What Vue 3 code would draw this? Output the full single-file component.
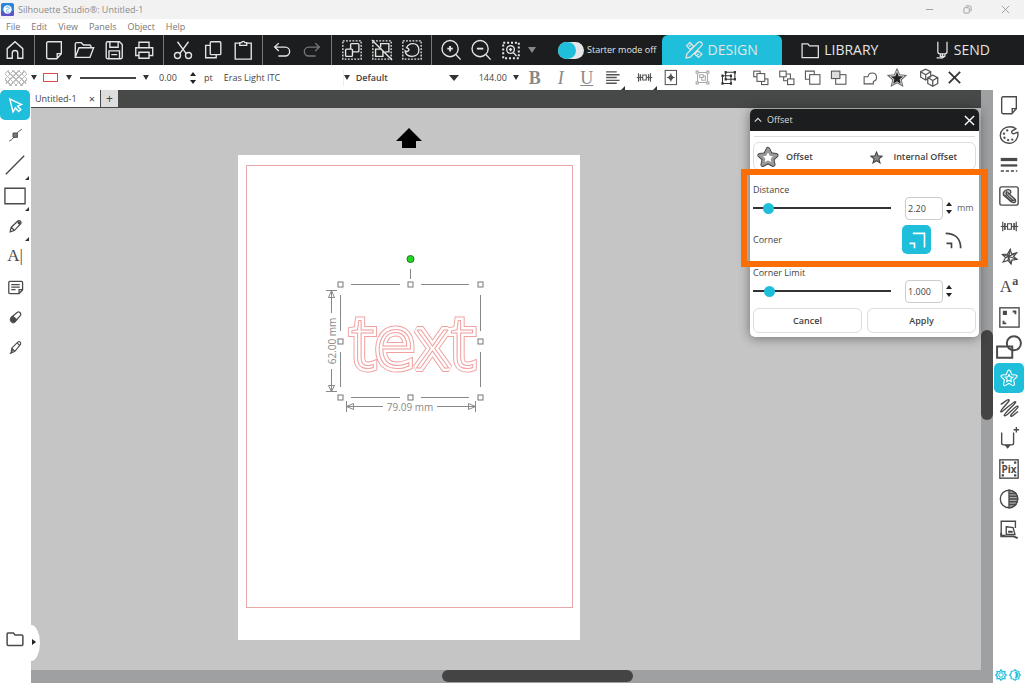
<script setup>
import { ref } from 'vue'

const menus = ['File', 'Edit', 'View', 'Panels', 'Object', 'Help']

const icons = {
  home: '<path d="M3.500 10.500 12 3l8.500 7.500V21h-5.500v-5.500a3 3 0 0 0-6 0V21H3.500z"/>',
  note: '<path d="M5.500 3h14.500v13l-5 5.500H5.500a1.500 1.500 0 0 1-1.500-1.500V4.500A1.500 1.500 0 0 1 5.500 3zM20 16h-4.500v5"/>',
  open: '<path d="M2.500 20V5.500a1.500 1.500 0 0 1 1.500-1.500h5l2.500 2.500H18a1.500 1.500 0 0 1 1.500 1.500v1.500M2.500 20l4-10.500h16L18.500 20z"/>',
  save: '<path d="M3.500 4.500A1.500 1.500 0 0 1 5 3h13l3 3v14a1.500 1.500 0 0 1-1.500 1.500H5A1.500 1.500 0 0 1 3.500 20zM7.500 3v6h9V3M6.500 21.500V13h11.500v8.500M9 17h6.500"/>',
  print: '<path d="M6.500 9V3.500h11V9M6 18H3V9.500h18.500V18H18M6.500 14.500h11v6.500h-11z"/>',
  cut: '<path d="m6 3 9.500 13M18 3 8.500 16"/><circle cx="6" cy="18" r="3.300"/><circle cx="18" cy="18" r="3.300"/>',
  copy: '<rect x="9" y="3" width="11.500" height="14" rx="1"/><path d="M9 7H4v13.500h11.500V17"/>',
  paste: '<path d="M8.500 4.500H3.500v17.500h17.500V4.500h-5"/><path d="M8.500 7V4h2a1.800 1.800 0 0 1 3.500 0h2v3z"/>',
  undo: '<path d="M8.500 4.500 4 8.800l4.500 4.300M4 8.800h11.500a4.500 4.500 0 0 1 0 9.700H8"/>',
  redo: '<path d="M15.500 4.500 20 8.800l-4.500 4.300M20 8.800H8.500a4.500 4.500 0 0 0 0 9.700H16"/>',
  selAll: '<rect x="2" y="2" width="20" height="20" stroke-dasharray="2 1.500"/><rect x="10.500" y="5" width="9" height="9" rx="1"/><rect x="5" y="11" width="7.500" height="8" rx="1" fill="#1c1d1e"/>',
  deselect: '<rect x="2" y="2" width="20" height="20" stroke-dasharray="2 1.500"/><path d="M10.500 9V5h9v9h-4M12 11H5v8h8v-6M1 1l22 22"/>',
  selColor: '<rect x="2" y="2" width="20" height="20" stroke-dasharray="2 1.500"/><path d="M12.500 5c4.500 0 7 3 7 7s-3 7-7.500 7c-4 0-7-2.500-7.500-6 1.500 1 3 1 4-.5C9.500 10.500 7 10 6 9.500 7.500 6.500 9.500 5 12.500 5z"/><path stroke-width="2" d="M12 8h.1M15.500 9h.1M17 12h.1M15 15h.1M11 16h.1"/>',
  zoomIn: '<circle cx="11" cy="10.500" r="8.800"/><path d="m17.300 17 5.200 5.500"/><path stroke-width="2" d="M8 10.500h6M11 7.500v6"/>',
  zoomOut: '<circle cx="11" cy="10.500" r="8.800"/><path d="m17.300 17 5.200 5.500"/><path stroke-width="2" d="M7.500 10.500h7"/>',
  zoomSel: '<rect x="3.500" y="4" width="17" height="17" stroke-width="2.200" stroke-dasharray="2.200 2.050"/><circle cx="11.500" cy="11.500" r="4.200"/><path d="m14.700 15 3.300 3.500M9.700 11.500h3.600M11.500 9.700v3.600"/>',
  cross: '<path d="m4 4 16 16M20 4 4 20"/>',
  design: '<path d="m3 7 4-4 4.500 4.500-4 4zM13 17l4-4L21.500 17l-4 4zM2.500 21.500l1-5L17 3a2.300 2.300 0 0 1 4 4L7.500 20.500zM6 8l2-2M15.500 18.500l2-2"/>',
  library: '<path d="M2.500 4.500h7l2 2.500h10.500v14H2.500z"/>',
  send: '<path d="M7 2v12a2.500 2.500 0 0 0 2.500 2.500h6A2.500 2.500 0 0 0 18 14V2M15.500 16.500v3l-3 2V17M5.500 21.500H12M10 17v2.500h5"/>',
  align: '<path stroke-width="2" d="M3 4h15M3 8h19M3 12h15M3 16h19M3 20h15"/>',
  space: '<path d="M3.500 6v12M20.500 6v12M1 12h8M15 12h8M9.500 8.500v7h5v-7z"/><path stroke-width="2" d="M6.200 7.500v9M17.800 7.500v9"/>',
  center: '<rect x="4.500" y="2" width="16" height="20"/><path d="M12.500 6.500v11M7 12h11"/><path fill="currentColor" d="m12.500 8.500 3.500 3.500-3.500 3.500L9 12z"/>',
  group: '<path d="M5 5h14v14H5zM8 8h5v4H8zM11 12v4h5v-6h-3"/><path fill="#fff" d="M3 3h3v3H3zM18 3h3v3h-3zM3 18h3v3H3zM18 18h3v3h-3z"/>',
  ungroup: '<path d="M8 4.500h13v10H8zM3.500 9.500h12v11h-12z"/><path stroke-width="3.500" d="M6.500 4.500h3M19.500 4.500h3M19.500 14.500h3M2 9.500h3M14 9.500h3M2 20.500h3M14 20.500h3M6.500 14.500h3"/>',
  front: '<rect x="2.500" y="3" width="9" height="8"/><rect x="13.500" y="14" width="9" height="8"/><rect x="7" y="6.500" width="11" height="11" fill="#fff"/>',
  back: '<path d="M8 7h9.500v9.500H8z"/><rect x="2.500" y="3" width="9" height="8" fill="#fff"/><rect x="13.500" y="14" width="9" height="8" fill="#fff"/>',
  forward: '<path d="M2 3h12.500v11.500H2z"/><rect x="8" y="8" width="14.500" height="13.500" fill="#fff"/>',
  backward: '<rect x="8" y="8" width="14.500" height="13.500"/><rect x="2" y="3" width="12" height="10.500" fill="#ddd"/>',
  weld: '<path d="M3 11h5.500A6 6 0 1 1 16 17.500V21H3z"/>',
  star: '<path stroke="#666" stroke-width="3.500" d="m12 2.500 2.800 6.300 6.700.6-5 4.500 1.500 6.600-6-3.500-6 3.500 1.500-6.600-5-4.500 6.700-.6z"/><path stroke="#ccc" fill="#ccc" stroke-width="1.300" d="m12 2.500 2.800 6.300 6.700.6-5 4.500 1.500 6.600-6-3.500-6 3.500 1.500-6.600-5-4.500 6.700-.6z"/><path stroke="none" fill="#222" d="m12 4 2.200 5.600 5.800.4-4.500 3.800 1.500 5.700-5-3.100-5 3.100 1.500-5.700L4 10l5.800-.4z"/>',
  cubes: '<path d="m8 1.500 6 3v6.500l-6 3.500-6-3.500V4.500zM2 4.500l6 3.500 6-3.500M8 8v6.500"/><path fill="#fff" d="m16.500 8.500 6 3v7l-6 3.500-6-3.500v-7zM10.500 11.500l6 3.500 6-3.500M16.500 15v7"/>',
  pointer: '<path stroke-width="2" d="m4 3 4.500 18 3.500-5.500 4.500 5 3-2.500-4.500-5 5.500-2.500z"/>',
  node: '<path d="M2 21c6-3 6-5 9-9s5-6 11-10"/><path fill="#777" d="M8 8h7v7H8z"/>',
  line: '<path d="M2 22 22 2"/>',
  rect: '<path d="M1 3.500h22v17H1z"/>',
  pencil: '<path stroke-width="2" d="m3.500 20.500 1.500-7L16 3c3-1.500 6 1.500 4.500 4.500L10 18.500zM5.500 13.500l4.500 4.500"/><path stroke-width="4" d="m16 4.500 3.500 3.500"/>',
  memo: '<path stroke-width="1.800" d="M4 3.500h16.500a1.500 1.500 0 0 1 1.500 1.500v10.500l-5 5H4A1.500 1.500 0 0 1 2.500 19V5A1.500 1.500 0 0 1 4 3.500zM22 15h-5v5.500M6 8h12M6 11.500h12M6 15h6"/>',
  eraser: '<path stroke-width="2" d="m5 12 10-8.500c3-1.500 7 2 5 5L11 19z"/><path fill="currentColor" d="m4.500 12.500 3.500-3 6.500 6-4 4.500c-4 2.500-9-3-6-7.500z"/>',
  dropper: '<path stroke-width="1.800" d="m6 13 10-10c2.500-1.500 5.500 1 4 4L11 18l-6 3zM6 13l5 5M15 5l4 4M3 22l5-6"/>',
  folder: '<path d="M2.500 4H10l2 2.500h9a1.500 1.500 0 0 1 1.500 1.500v11a1.500 1.500 0 0 1-1.500 1.500H3A1.500 1.500 0 0 1 1.500 19V5A1 1 0 0 1 2.500 4z"/>',
  palette: '<path d="M13 3c2.500 0 5 .8 6.500 2.200L15.500 7.500c-1.500 2 .5 3.500 2 3 1.500-.4 3-1.500 4-1.500C23 15 18.500 21 12 21c-5.500 0-9.500-3.500-9.500-8.500C2.500 7 7 3 13 3z"/><path stroke-width="2.500" stroke-linecap="round" d="M10 7h.1M6.500 10.500h.1M7 15h.1M11 17.500h.1M15.500 17h.1"/>',
  lines: '<path stroke-width="3.500" d="M3 6h18"/><path stroke-width="2.500" d="M3 12.500h18"/><path stroke-dasharray="3.500 2" d="M3 18.500h18"/>',
  image: '<rect x="2" y="2" width="20" height="20" rx="2"/><path fill="#ccc" d="M6 11c-1-3 2-6 5-6s4 3 2 4.500c-1 1-2 0-2-1l8 7.500c1 3-2 4-4 2.500z"/><path d="m7 11 7 7 5-2M10 7c-2 1-1 4 1 5l5 5"/>',
  morph: '<path d="m13 3 1.500 6 6.500-1.500-4 4.500 4.500 3.500-6.500 1-1 5-4-4.500-6 2 3-5.500L3 9.500l6.500-.5z"/><path d="m3 9.500 18.500 6M13 3l-3 14M21 7.500l-14 6M9.500 9l4.500 12.500"/>',
  trace: '<rect x="2" y="2" width="21" height="21"/><path fill="currentColor" d="M6 6h3v3H6z"/><path stroke-width="2" d="M16 6h3v3M6 16v3h3"/>',
  shapes: '<path stroke-width="1.800" d="M1 11.500h14V22H1z"/><circle cx="16.500" cy="8.500" r="6.500" stroke-width="1.800"/>',
  starRing: '<path stroke-width="4.500" stroke-linejoin="round" d="m12 4 2.400 5.300 5.600.6-4.200 3.900 1.200 5.700-5-2.900-5 2.900 1.200-5.700L4 9.900l5.600-.6z"/><path stroke="#1fbfdb" stroke-linejoin="round" stroke-width="1.800" d="m12 4 2.400 5.300 5.600.6-4.200 3.900 1.200 5.700-5-2.900-5 2.900 1.200-5.700L4 9.900l5.600-.6z"/>',
  sketch: '<path d="M3 8c3-1 7-6 9-5S2 14 3 16 16 5 19 5 5 19 7 20.500 19 9 21.500 10 12 20 14 21s5-4 8-5"/>',
  force: '<path d="M4 6v11.500a2 2 0 0 0 2 2h9a2 2 0 0 0 2-2V6M20 0v6M17 3h6"/><path fill="currentColor" d="m8.500 20 2 2.500 2-2.500z"/>',
  pix: '<rect x="2" y="2" width="20" height="20"/><path stroke-width="2.500" d="M4 5h2.500M17.500 5H20M4 19h2.500M17.500 19H20"/>',
  contrast: '<circle cx="12" cy="12" r="9.500"/><path fill="#aaa" d="M12 2.500a9.500 9.500 0 0 1 0 19z"/><path d="M12 6h7M12 9h9M12 12h9.500M12 15h9M12 18h7"/>',
  layers: '<path d="M19 11V3.500H3.500V19H8M9 9.500l7.500 1 2 7.500H9z"/><path stroke-width="2" d="M3.500 16v4H17l4.500 2M11 15h5"/>',
  gear: '<circle cx="12" cy="12" r="4.500" stroke-width="2"/><path stroke-width="2.500" d="m12 1.500 3 4 5-.5-.5 4.500 3 2.500-3 3 .5 4.500-5-.5-3 3.500-3-3.500-5 .5.500-4.500-3-3 3-2.500L4 5l5 .5z"/>',
  theme: '<path stroke-width="2.500" d="m12 1.500 3 2.500 4.500.5.500 4.500 2.500 3-2.500 3-.5 4.500-4.500.5-3 2.500L9 20l-4.500-.5L4 15l-2.500-3L4 9l.5-4.500L9 4z"/><path fill="currentColor" d="M12 6a6 6 0 0 1 0 12c3-3 3-9 0-12z"/>',
  sharp: '<path d="M7 4h14v17M3 16h6v6"/>',
  round: '<path d="M2 4c11 0 18 6 18 18M3 16h6v6"/>',
}

const barGroups = [
  [['home', 'Home']],
  [['note', 'New'], ['open', 'Open'], ['save', 'Save'], ['print', 'Print']],
  [['cut', 'Cut'], ['copy', 'Copy'], ['paste', 'Paste']],
  [['undo', 'Undo'], ['redo', 'Redo']],
  [['selAll', 'Select all'], ['deselect', 'Deselect'], ['selColor', 'Select by color']],
  [['zoomIn', 'Zoom in'], ['zoomOut', 'Zoom out'], ['zoomSel', 'Zoom to selection']],
]
const propGroups = [
  ['group', 'ungroup'],
  ['front', 'back', 'forward', 'backward'],
  ['weld', 'star'],
  ['cubes', 'cross'],
]
const leftTools = ['pointer', 'node', 'line', 'rect', 'pencil', 'type', 'memo', 'eraser', 'dropper']
const cornered = ['line', 'rect', 'pencil']
const rightTools = ['note', 'palette', 'lines', 'image', 'space', 'morph', 'fonts', 'trace', 'shapes', 'starRing', 'sketch', 'force', 'pix', 'contrast', 'layers']

const handles = [340, 410, 480].flatMap(x => [284, 341, 397].map(y => [x, y])).filter(([x, y]) => x !== 410 || y !== 341)

const starter = ref(false)
const distance = ref(8)
const limit = ref(9)
</script>

<template>
  <div class="app">
    <header class="titlebar">
      <svg class="logo" viewBox="0 0 14 14"><rect width="14" height="14" rx="2" fill="#2b86d9" /><path d="M0 9h14v3a2 2 0 0 1-2 2H2a2 2 0 0 1-2-2z" fill="#5a55c8" /><circle cx="7" cy="7" r="4.500" fill="#fff" /><path d="M5 5c2-2 5 0 4 1S5 7 6 9s3 0 3 0" fill="none" stroke="#49b6e4" /></svg>
      <span class="title">Silhouette Studio®: Untitled-1</span>
      <button class="win" aria-label="Minimize"><svg viewBox="0 0 10 10"><path d="M1 5h8" /></svg></button>
      <button class="win" aria-label="Restore"><svg viewBox="0 0 10 10"><rect x="1" y="3" width="6" height="6" rx="1" /><path d="M3 1h4a2 2 0 0 1 2 2v4" /></svg></button>
      <button class="win" aria-label="Close"><svg viewBox="0 0 10 10"><path d="m1 1 8 8M9 1 1 9" /></svg></button>
    </header>

    <nav class="menubar">
      <button v-for="m in menus" :key="m">{{ m }}</button>
    </nav>

    <div class="toolbar">
      <div v-for="(g, i) in barGroups" :key="i" class="group">
        <button v-for="[icon, label] in g" :key="icon" :class="['tool', icon]" :aria-label="label">
          <svg class="ico" viewBox="0 0 24 24" v-html="icons[icon]" />
        </button>
      </div>
      <span class="caret dim"></span>
      <label class="starter"><input v-model="starter" type="checkbox" class="switch">Starter mode off</label>
      <button class="mode active"><svg class="ico" viewBox="0 0 24 24" v-html="icons.design" />DESIGN</button>
      <button class="mode library"><svg class="ico" viewBox="0 0 24 24" v-html="icons.library" />LIBRARY</button>
      <button class="mode send"><svg class="ico" viewBox="0 0 24 24" v-html="icons.send" />SEND</button>
    </div>

    <div class="props">
      <button class="swatch" aria-label="Fill color"></button>
      <span class="caret"></span>
      <button class="outline" aria-label="Line color"></button>
      <span class="caret"></span>
      <button class="stroke" aria-label="Line style"></button>
      <span class="caret"></span>
      <input class="thick" value="0.00" aria-label="Line thickness">
      <span class="spin"><i></i><i></i></span>
      <span class="unit">pt</span>
      <select class="font" aria-label="Font"><option>Eras Light ITC</option></select>
      <span class="caret"></span>
      <select class="style" aria-label="Font style"><option>Default</option></select>
      <span class="caret big"></span>
      <input class="size" value="144.00" aria-label="Font size">
      <span class="caret"></span>
      <div class="cluster text">
        <button class="b">B</button><button class="i">I</button><button class="u">U</button>
        <button class="more" aria-label="Justify"><svg class="ico" viewBox="0 0 24 24" v-html="icons.align" /></button>
      </div>
      <div class="cluster">
        <button class="more" aria-label="Spacing"><svg class="ico" viewBox="0 0 24 24" v-html="icons.space" /></button>
        <button aria-label="Center to page"><svg class="ico" viewBox="0 0 24 24" v-html="icons.center" /></button>
      </div>
      <div v-for="(g, i) in propGroups" :key="i" class="cluster">
        <button v-for="icon in g" :key="icon" :class="'p-' + icon" :aria-label="icon"><svg class="ico" viewBox="0 0 24 24" v-html="icons[icon]" /></button>
      </div>
    </div>

    <main class="body">
      <aside class="side left">
        <button v-for="t in leftTools" :key="t" :class="{ on: t === 'pointer', more: cornered.includes(t) }" :aria-label="t">
          <span v-if="t === 'type'" class="type">A|</span>
          <svg v-else class="ico" viewBox="0 0 24 24" v-html="icons[t]" />
        </button>
        <button class="lib" aria-label="Library folder"><svg class="ico" viewBox="0 0 24 24" v-html="icons.folder" /></button>
      </aside>

      <section class="work">
        <div class="tabs">
          <div class="tab">Untitled-1<button aria-label="Close tab">×</button></div>
          <button class="add" aria-label="New tab">+</button>
        </div>
        <div class="canvas">
          <svg class="feed" viewBox="0 0 26 20"><path d="M13 0 26 13h-6v7H6v-7H0z" /></svg>
          <div class="page">
            <div class="margin"></div>
            <svg class="selection" viewBox="320 250 170 170">
              <g class="word">
                <text class="outer" x="351" y="368">text</text>
                <text class="gap" x="351" y="368">text</text>
                <text class="inner" x="351" y="368">text</text>
              </g>
              <path class="guide" d="M351 284.500h49M421 284.500h48M351 397.500h49M421 397.500h48M340.500 295v36M340.500 352v35M480.500 295v36M480.500 352v35M410.500 269v10" />
              <path class="guide" d="M326 290.500h11M326 391.500h11M331.500 291v22M331.500 369v22M346.500 401v11M475.500 401v11M346 406.500h37M437 406.500h38M328.500 297.500h6l-3-7zM328.500 385.500h6l-3 6zM353.500 403.500v6l-7-3zM468.500 403.500v6l7-3z" />
              <rect v-for="([x, y], i) in handles" :key="i" class="handle" :x="x - 2" :y="y - 2" width="5" height="5" />
              <circle cx="410.500" cy="259" r="3.500" class="rotate" />
              <text class="dim-label" x="410" y="411" text-anchor="middle">79.09 mm</text>
              <text class="dim-label" x="0" y="0" text-anchor="middle" transform="translate(336 341) rotate(-90)">62.00 mm</text>
            </svg>
          </div>
        </div>
        <div class="vscroll"><div class="vthumb"></div></div>
        <div class="hscroll"><div class="hthumb"></div></div>
        <div class="flyout"></div>

        <section class="panel">
          <header>
            <svg class="chev" viewBox="0 0 10 10"><path d="m1 7 4-4 4 4" /></svg>
            <h2>Offset</h2>
            <button aria-label="Close panel"><svg viewBox="0 0 12 12"><path d="m1 1 10 10M11 1 1 11" /></svg></button>
          </header>
          <div class="kinds">
            <button><svg class="bigstar" viewBox="0 0 24 24"><path d="m12 3.500 2.800 5.800 6.200.8-4.500 4.200 1.200 6L12 17.300l-5.700 3 1.200-6L3 10.100l6.200-.8z" stroke="#444" stroke-width="5" /><path d="m12 3.500 2.800 5.800 6.200.8-4.500 4.200 1.200 6L12 17.300l-5.700 3 1.200-6L3 10.100l6.200-.8z" stroke="#999" stroke-width="3" fill="#fff" /></svg>Offset</button>
            <button class="internal"><svg class="smallstar" viewBox="0 0 24 24"><path d="m12 2 3 7 7.500.5-6 5 2 7.500L12 18l-6.500 4 2-7.500-6-5L9 9z" stroke="#444" stroke-width="2" fill="#888" /></svg>Internal Offset</button>
          </div>
          <label class="cap" for="distance">Distance</label>
          <div class="row">
            <input id="distance" v-model="distance" type="range" min="0" max="100">
            <input class="num" value="2.20" aria-label="Distance value">
            <span class="spin"><i></i><i></i></span>
            <span class="mm">mm</span>
          </div>
          <div class="corner">
            <span>Corner</span>
            <button class="on" aria-label="Sharp"><svg class="ico" viewBox="0 0 24 24" v-html="icons.sharp" /></button>
            <button aria-label="Round"><svg class="ico" viewBox="0 0 24 24" v-html="icons.round" /></button>
          </div>
          <label class="cap low" for="limit">Corner Limit</label>
          <div class="row">
            <input id="limit" v-model="limit" type="range" min="0" max="100">
            <input class="num" value="1.000" aria-label="Corner limit value">
            <span class="spin"><i></i><i></i></span>
          </div>
          <div class="actions"><button>Cancel</button><button>Apply</button></div>
        </section>
        <div class="highlight"></div>
      </section>

      <aside class="side right">
        <button v-for="t in rightTools" :key="t" :class="['r-' + t, { on: t === 'starRing' }]" :aria-label="t">
          <span v-if="t === 'fonts'" class="type">A<sup>a</sup></span>
          <template v-else>
            <svg class="ico" viewBox="0 0 24 24" v-html="icons[t]" />
            <b v-if="t === 'pix'" class="pixtext">Pix</b>
          </template>
        </button>
        <div class="prefs">
          <button aria-label="Preferences"><svg class="ico" viewBox="0 0 24 24" v-html="icons.gear" /></button>
          <button aria-label="Theme"><svg class="ico" viewBox="0 0 24 24" v-html="icons.theme" /></button>
        </div>
      </aside>
    </main>
  </div>
</template>

<style>
body { margin: 0; overflow: hidden; }
</style>

<style scoped>
* { box-sizing: border-box; }
.app { height: 100vh; display: flex; flex-direction: column; font: 9px/12px "Open Sans", "Noto Sans", sans-serif; color: #444; background: #fff; }
button { border: 0; padding: 0; margin: 0; background: none; font: inherit; color: inherit; display: flex; align-items: center; justify-content: center; flex: none; }
input, select { font: inherit; color: inherit; border: 0; padding: 0; margin: 0; background: none; appearance: none; outline: 0; min-width: 0; }
svg { fill: none; stroke: currentColor; flex: none; display: block; }
.ico { width: 22px; height: 22px; stroke-width: 1.5; overflow: visible; }

.titlebar { height: 19px; flex: none; display: flex; align-items: center; background: #f2f2f2; color: #8b8b8b; }
.logo { width: 13px; height: 13px; margin: 0 4px 0 1px; stroke: none; }
.title { flex: 1; }
.win { width: 38px; height: 19px; color: #999; }
.win svg { width: 9px; height: 9px; }

.menubar { height: 16px; flex: none; display: flex; gap: 11px; padding-left: 6px; color: #777; }

.toolbar { height: 30px; flex: none; display: flex; align-items: stretch; background: #1c1d1e; color: #e4e4e4; }
.group { display: flex; padding: 0 4px; border-right: 1px solid #777; }
.group:first-child { padding: 0 4px 0 0; }
.group:nth-child(5) { padding-left: 5px; }
.group:nth-child(6) { border-right: 0; padding-right: 0; }
.tool { width: 30px; }
.tool.redo { color: #777; }
.caret { flex: none; width: 0; height: 0; align-self: center; border: 3px solid transparent; border-top: 5px solid #333; border-bottom: 0; }
.caret.big { border-width: 6px 5px 0; }
.caret.dim { border-width: 6px 4px 0; border-top-color: #888; margin: 0 22px 0 2px; }
.starter { display: flex; align-items: center; gap: 3px; white-space: nowrap; }
.switch { width: 26px; height: 17px; border-radius: 9px; background: #e4e6e7; position: relative; }
.switch::before { content: ""; display: block; width: 18px; height: 17px; border-radius: 9px; background: #1fbfdb; }
.mode { font-size: 14px; gap: 4px; }
.mode.active { width: 120px; margin-left: 6px; padding-right: 3px; background: #1fbfdb; border-radius: 6px 6px 0 0; }
.mode.library { margin-left: 18px; }
.mode.send { margin: 0 34px 0 auto; gap: 2px; }
.mode .ico { width: 20px; height: 20px; }

.props { height: 25px; flex: none; display: flex; align-items: center; background: #fff; }
.swatch { width: 22px; height: 16px; margin: 0 4px 0 5px; border-radius: 5px; background: repeating-linear-gradient(45deg, #bbb 0 1px, transparent 1px 4px), repeating-linear-gradient(-45deg, #bbb 0 1px, transparent 1px 4px); }
.outline { width: 15px; height: 9px; margin: 0 8px 0 6px; border: 1px solid #e04a4a; }
.stroke { width: 56px; height: 2px; margin: 0 7px 0 8px; background: #444; }
.thick { width: 28px; margin: 0 3px 0 10px; }
.spin { display: flex; flex-direction: column; gap: 4px; width: 6px; flex: none; }
.spin i { border: 3px solid transparent; border-bottom: 4px solid #222; border-top: 0; }
.spin i:last-child { border-bottom: 0; border-top: 4px solid #222; }
.unit { margin: 0 11px 0 8px; }
.font { width: 120px; height: 16px; border-right: 1px solid #eee; }
.style { width: 93px; margin-left: 6px; font-weight: 600; }
.size { width: 34px; margin-left: 20px; }
.caret.big + .size + .caret { margin-right: 3px; }
.cluster { display: flex; padding-left: 6px; color: #555; }
.cluster.text { padding-left: 0; }
.cluster button { width: 26px; height: 24px; position: relative; }
.cluster .ico { width: 17px; height: 17px; }
.cluster .p-cubes .ico { width: 20px; height: 20px; }
.cluster .p-star .ico { width: 18px; height: 18px; }
.cluster .p-cross { color: #333; }
.cluster .p-cross .ico { stroke-width: 2.5; }
.cluster .p-group { color: #aaa; }
.cluster .p-ungroup { color: #333; }
.b, .i, .u { font: 18px/22px "Liberation Serif", serif; color: #888; }
.b { font-weight: bold; }
.i { font-style: italic; }
.u { text-decoration: underline; }
.more { position: relative; }
.more::after { content: ""; position: absolute; right: 1px; bottom: 0; border: 2px solid #333; border-top-color: transparent; border-left-color: transparent; }

.body { flex: 1; min-height: 0; display: flex; }
.side { width: 31px; flex: none; display: flex; flex-direction: column; background: #fff; color: #4a4a4a; }
.side > button { width: 30px; height: 30px; position: relative; }
.side > button:nth-child(3n) { margin-bottom: 1px; }
.side .on { background: #1fbfdb; border-radius: 5px; color: #fff; }
.left .ico { width: 17px; height: 17px; }
.left > button:nth-child(2) .ico, .left > button:nth-child(5) .ico, .left > button:nth-child(8) .ico, .left > button:nth-child(9) .ico { width: 15px; height: 15px; }
.left > button:nth-child(3) .ico, .left > button:nth-child(4) .ico { width: 22px; height: 22px; }
.right > button { align-self: flex-end; }
.right .ico { width: 22px; height: 22px; }
.right .r-shapes .ico { width: 26px; height: 26px; }
.right .r-space .ico, .right .r-morph .ico { width: 19px; height: 19px; }
.right .r-starRing .ico { width: 20px; height: 20px; }
.type { font: 17px/20px "Liberation Serif", serif; }
.type sup { font-size: 12px; line-height: 1px; font-weight: bold; }
.left > .lib { margin-top: auto; margin-bottom: 29px; }
.lib .ico { width: 18px; height: 18px; stroke-width: 2; }
.pixtext { position: absolute; font-size: 10px; }
.prefs { margin-top: auto; display: flex; gap: 2px; padding: 0 0 2px 2px; color: #1fbfdb; }
.prefs .ico { width: 12px; height: 12px; }

.work { flex: 1; min-width: 0; position: relative; display: grid; grid-template: 18px 1fr 13px / 1fr 12px; background: #9fa0a1; }
.tabs { display: flex; background: #474848; }
.tab { width: 69px; height: 17px; background: #fff; display: flex; align-items: center; justify-content: space-between; padding: 0 5px 0 4px; }
.tab button { font-size: 11px; }
.add { width: 17px; height: 17px; margin-left: 1px; background: #ddd; font-size: 12px; }
.canvas { grid-row: 2; background: #c5c5c5; position: relative; overflow: hidden; }
.feed { position: absolute; left: 365px; top: 20px; width: 26px; height: 20px; fill: #000; stroke: none; }
.page { position: absolute; left: 207px; top: 47px; width: 342px; height: 485px; background: #fff; }
.margin { position: absolute; inset: 10px 7px 32px 8px; border: 1px solid #e9a8a8; }
.selection { position: absolute; left: 82px; top: 95px; width: 170px; height: 170px; stroke: none; }
.word text { font: 300 72px "Open Sans", "Noto Sans", sans-serif; stroke-linejoin: miter; stroke-miterlimit: 2; fill: #fff; }
.word .outer { stroke: #f2a0a0; stroke-width: 8px; }
.word .gap { stroke: #fff; stroke-width: 6px; }
.word .inner { stroke: #f2a0a0; stroke-width: 1px; }
.guide { stroke: #888; }
.handle { fill: #fff; stroke: #777; }
.rotate { fill: #22d822; stroke: #187a18; }
.dim-label { font-size: 10px; fill: #8a8a8a; }
.vscroll { grid-area: 1 / 2 / 4 / 3; }
.hscroll { grid-area: 3 / 1; }
.vthumb { width: 12px; height: 90px; margin-top: 240px; border-radius: 6px; background: #444; }
.hthumb { width: 191px; height: 12px; margin-left: 411px; border-radius: 6px; background: #444; }
.flyout { position: absolute; left: 0; bottom: 22px; width: 9px; height: 36px; background: #fff; border-radius: 0 9px 9px 0 / 0 18px 18px 0; }
.flyout::after { content: ""; position: absolute; left: 1px; top: 14px; border: 3px solid transparent; border-left: 4px solid #222; border-right: 0; }

.panel { position: absolute; right: 14px; top: 19px; width: 229px; background: #fff; border-radius: 5px; box-shadow: 0 1px 12px rgba(0, 0, 0, .45); padding: 0 3px 4px; }
.panel header { height: 22px; margin: 0 -3px; padding: 0 4px; display: flex; align-items: center; gap: 5px; background: #1c1d1e; border-radius: 5px 5px 0 0; color: #ddd; }
.panel h2 { font: inherit; margin: 0; flex: 1; }
.chev { width: 8px; height: 8px; stroke-width: 1.5; }
.panel header button svg { width: 11px; height: 11px; stroke-width: 1.5; color: #fff; }
.kinds { border: 1px solid #ddd; border-radius: 6px; height: 28px; margin-top: 11px; position: relative; display: flex; align-items: center; justify-content: space-between; font-weight: 600; padding: 2px 18px 0 2px; }
.kinds::before { content: ""; position: absolute; left: 0; right: 0; top: -7px; border-top: 1px solid #ddd; }
.kinds button { gap: 6px; }
.kinds .internal { gap: 10px; }
.bigstar { width: 24px; height: 24px; stroke-linejoin: round; overflow: visible; padding: 1px; }
.smallstar { width: 13px; height: 13px; }
.cap { display: block; margin-top: 14px; }
.row { display: flex; align-items: center; height: 24px; }
.row input[type="range"] { width: 138px; height: 12px; background: linear-gradient(#333, #333) center / 100% 2px no-repeat; }
.row input[type="range"]::-webkit-slider-thumb { appearance: none; width: 11px; height: 11px; border-radius: 50%; background: #1fbfdb; }
.num { width: 38px; height: 23px; margin: 0 2px 0 14px; border: 1px solid #ccc; border-radius: 4px; padding-left: 2px; }
.num + .spin { margin: 0 5px 0 1px; }
.mm { color: #666; }
.corner { display: flex; align-items: center; gap: 8px; margin-top: 5px; padding-right: 8px; }
.corner span { flex: 1; }
.corner button { width: 29px; height: 29px; border-radius: 5px; }
.corner .on { background: #1fbfdb; color: #fff; }
.corner .ico { width: 20px; height: 20px; stroke-width: 2; }
.cap.low { margin-top: 13px; }
.actions { display: flex; gap: 5px; margin-top: 5px; }
.actions button { flex: 1; height: 25px; border: 1px solid #ddd; border-radius: 6px; font-weight: 600; }
.highlight { position: absolute; right: 5px; top: 79px; width: 247px; height: 98px; border: 6px solid #fa6e05; pointer-events: none; }
</style>
